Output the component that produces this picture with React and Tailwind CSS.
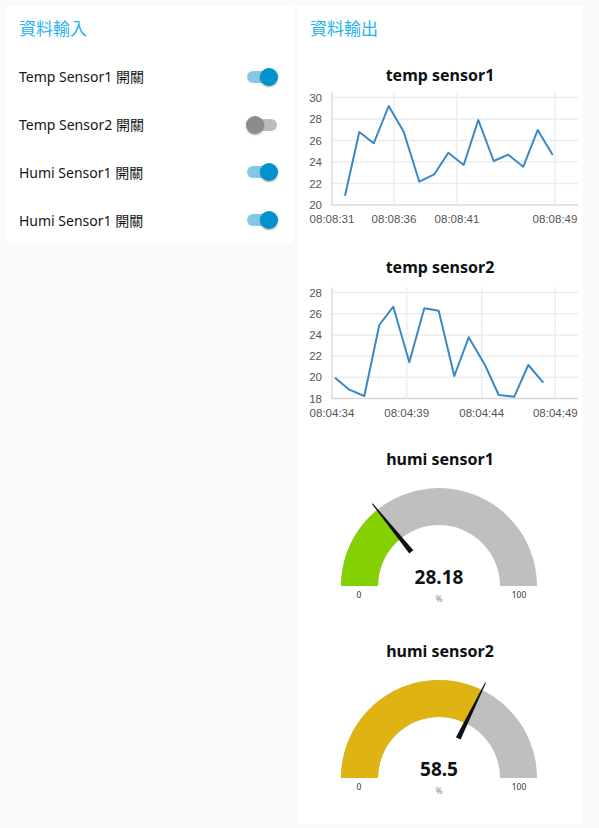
import React from 'react';

const font = { fontFamily: '"Noto Sans", "Noto Sans CJK TC", sans-serif' };

const switches = [
  { label: 'Temp Sensor1 開關', on: true },
  { label: 'Temp Sensor2 開關', on: false },
  { label: 'Humi Sensor1 開關', on: true },
  { label: 'Humi Sensor1 開關', on: true },
];

const chart1 = {
  title: 'temp sensor1',
  yTicks: [[30, 12.5], [28, 34], [26, 55.5], [24, 77], [22, 98.5], [20, 120]],
  xTicks: [['08:08:31', 35], ['08:08:36', 97], ['08:08:41', 160], ['08:08:49', 258]],
  points: [
    [48, 110.7], [62.3, 47], [76.7, 58.3], [91.7, 21], [106.7, 46.7], [122.3, 96.7],
    [137.3, 89.3], [151.3, 67.7], [166.7, 80], [181.3, 35], [196.7, 76], [211.3, 69.7],
    [226.3, 81.7], [240.7, 45], [255.7, 70],
  ],
};

const chart2 = {
  title: 'temp sensor2',
  yTicks: [[28, 15.5], [26, 36.7], [24, 57.9], [22, 79.1], [20, 100.3], [18, 121.5]],
  xTicks: [['08:04:34', 35], ['08:04:39', 109.7], ['08:04:44', 184.7], ['08:04:49', 258.3]],
  points: [
    [38, 100.7], [51.7, 112.3], [67.3, 119], [82.3, 48], [96.3, 29.7], [112.3, 85.3],
    [127.3, 31.3], [141.7, 33.7], [157.3, 99], [171.7, 60.3], [188, 88], [201.7, 118],
    [217.3, 119.7], [231.3, 88], [246.3, 105.7],
  ],
};

const Toggle = ({ on }) => (
  <div className="relative w-[32px] h-[18px]">
    <div
      className={`absolute left-[1px] top-[3px] w-[30px] h-[12px] rounded-full ${on ? 'bg-[#84c8e6]' : 'bg-[#bdbdbd]'}`}
    />
    <div
      className={`absolute top-0 w-[18px] h-[18px] rounded-full shadow-[0_1px_2px_rgba(0,0,0,0.35)] ${on ? 'left-[14px] bg-[#0094ce]' : 'left-0 bg-[#8c8c8c]'}`}
    />
  </div>
);

const LineChart = ({ data }) => {
  const bottom = data.yTicks[data.yTicks.length - 1][1];
  const top = data.yTicks[0][1] - 5;
  return (
    <svg width="286" height="160" className="block">
      {data.yTicks.map(([v, y]) => (
        <g key={v}>
          <line x1="34" x2="281" y1={y} y2={y} stroke={y === bottom ? '#d8d8d8' : '#ececec'} strokeWidth="1.5" />
          <text
            x="25"
            y={y + 4}
            textAnchor="end"
            fontSize="11.5"
            fill="#555"
            fontFamily="Liberation Sans, Arial, sans-serif"
          >
            {v}
          </text>
        </g>
      ))}
      {data.xTicks.map(([t, x]) => (
        <g key={t}>
          <line x1={x} x2={x} y1={top} y2={bottom} stroke={x === 35 ? '#dcdcdc' : '#ececec'} strokeWidth="1.5" />
          <text
            x={x}
            y={bottom + 18}
            textAnchor="middle"
            fontSize="11.5"
            fill="#555"
            fontFamily="Liberation Sans, Arial, sans-serif"
          >
            {t}
          </text>
        </g>
      ))}
      <polyline
        points={data.points.map((p) => p.join(',')).join(' ')}
        fill="none"
        stroke="#3a89c4"
        strokeWidth="2"
        strokeLinejoin="round"
      />
    </svg>
  );
};

const Gauge = ({ value, angle, color }) => {
  const cx = 142;
  const cy = 117;
  const ro = 98;
  const ri = 61;
  const a = (angle * Math.PI) / 180;
  const pt = (r) => [cx + r * Math.cos(a), cy - r * Math.sin(a)];
  const [ox, oy] = pt(ro);
  const [ix, iy] = pt(ri);
  const px = Math.sin(a);
  const py = Math.cos(a);
  const [bx, by] = pt(44);
  const [tx, ty] = pt(106);
  const needle = [
    [bx + 2.6 * px, by + 2.6 * py],
    [tx + 0.5 * px, ty + 0.5 * py],
    [tx - 0.5 * px, ty - 0.5 * py],
    [bx - 2.6 * px, by - 2.6 * py],
  ]
    .map((p) => p.join(','))
    .join(' ');

  return (
    <svg width="286" height="160" className="block">
      <path
        d={`M ${cx - ro} ${cy} A ${ro} ${ro} 0 0 1 ${cx + ro} ${cy} L ${cx + ri} ${cy} A ${ri} ${ri} 0 0 0 ${cx - ri} ${cy} Z`}
        fill="#bfbfbf"
      />
      <path
        d={`M ${cx - ro} ${cy} A ${ro} ${ro} 0 0 1 ${ox} ${oy} L ${ix} ${iy} A ${ri} ${ri} 0 0 0 ${cx - ri} ${cy} Z`}
        fill={color}
      />
      <polygon points={needle} fill="#111" />
      <text
        x={cx}
        y={cy - 2}
        textAnchor="middle"
        fontSize="19"
        fontWeight="700"
        fill="#111"
        fontFamily="Noto Sans, sans-serif"
      >
        {value}
      </text>
      <text x={cx} y={cy + 16} textAnchor="middle" fontSize="8" fill="#888" fontFamily="Noto Sans, sans-serif">
        %
      </text>
      <text x={cx - 80} y={cy + 12} textAnchor="middle" fontSize="8.5" fill="#333" fontFamily="Noto Sans, sans-serif">
        0
      </text>
      <text x={cx + 80} y={cy + 12} textAnchor="middle" fontSize="8.5" fill="#333" fontFamily="Noto Sans, sans-serif">
        100
      </text>
    </svg>
  );
};

const Block = ({ title, children }) => (
  <div className="h-[192px] flex flex-col">
    <div className="h-[32px] pt-[12px] text-center text-[16px] leading-[20px] font-bold text-[#111]">{title}</div>
    {children}
  </div>
);

const App = () => {
  return (
    <div className="min-h-screen bg-[#fafafa] flex items-start gap-[4px] pl-[7px] pt-[6px]" style={font}>
      <div className="w-[286px] h-[238px] bg-white flex flex-col">
        <div className="h-[47px] pt-[13px] px-[12px] text-[17px] leading-[20px] text-[#27b3ec]">資料輸入</div>
        {switches.map((s, i) => (
          <div key={i} className="h-[48px] flex items-center justify-between pl-[12px] pr-[15px]">
            <span className="text-[14px] text-[#161616]">{s.label}</span>
            <Toggle on={s.on} />
          </div>
        ))}
      </div>

      <div className="w-[286px] h-[818px] bg-white flex flex-col">
        <div className="h-[47px] pt-[13px] px-[13px] text-[17px] leading-[20px] text-[#27b3ec]">資料輸出</div>
        <Block title={chart1.title}>
          <LineChart data={chart1} />
        </Block>
        <Block title={chart2.title}>
          <LineChart data={chart2} />
        </Block>
        <Block title="humi sensor1">
          <Gauge value="28.18" angle={129} color="#84d000" />
        </Block>
        <Block title="humi sensor2">
          <Gauge value="58.5" angle={64} color="#dfb412" />
        </Block>
      </div>
    </div>
  );
};

export default App;
